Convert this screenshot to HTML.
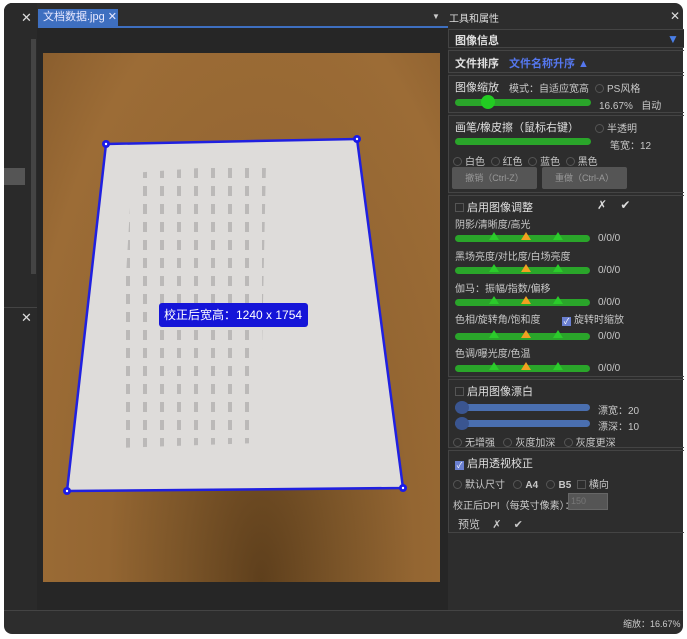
<!DOCTYPE html>
<html><head><meta charset="utf-8"><style>
*{margin:0;padding:0;box-sizing:border-box}
body{width:687px;height:639px;background:#fff;position:relative;overflow:hidden;font-family:"Liberation Sans","Noto Sans CJK SC",sans-serif;font-size:10px;color:#c8c8c8}
.a{position:absolute}
.win{left:4px;top:3px;width:679px;height:631px;background:#2d2d2d;border-radius:8px;overflow:hidden}
.sec{position:absolute;left:448px;width:236px;border:1px solid #444;border-right:none}
.bar{position:absolute;height:7px;border-radius:4px;background:#2aa52a}
.bbar{position:absolute;height:7px;border-radius:4px;background:#4a6fb0}
.tg{position:absolute;width:0;height:0;border-left:5px solid transparent;border-right:5px solid transparent;border-bottom:8px solid #2bcb2b}
.to{position:absolute;width:0;height:0;border-left:5px solid transparent;border-right:5px solid transparent;border-bottom:8px solid #f0a020}
.cb{display:inline-block;width:9px;height:9px;border:1px solid #555;vertical-align:-1px;margin-right:3px}
.rd{display:inline-block;width:9px;height:9px;border:1px solid #555;border-radius:50%;vertical-align:-1px;margin-right:3px}
.chk{display:inline-block;width:9px;height:9px;background:#6a7fd0;vertical-align:-1px;margin-right:3px;color:#fff;font-size:8px;line-height:9px;text-align:center}
.t{position:absolute;white-space:nowrap}
.h{font-size:11px;color:#e0e0e0}
.btn{position:absolute;background:#555;color:#999;border-radius:2px;font-size:9px;text-align:center;line-height:22px}
</style></head><body>
<div class="a win">
<div class="a" style="left:0;top:0;width:33px;height:607px;background:#2a2a2a"></div>
<div class="t" style="left:17px;top:7px;font-size:13px;color:#ddd">✕</div>
<div class="a" style="left:27px;top:36px;width:5px;height:235px;background:#444"></div>
<div class="a" style="left:0;top:165px;width:21px;height:17px;background:#555"></div>
<div class="t" style="left:17px;top:307px;font-size:13px;color:#ddd">✕</div>
<div class="a" style="left:0;top:304px;width:33px;height:1px;background:#444"></div>
<div class="a" style="left:34px;top:6px;width:80px;height:17px;background:#3e6fc0;color:#e8e8ff;font-size:11px;line-height:17px;padding-left:5px">文档数据.jpg ✕</div>
<div class="a" style="left:34px;top:23px;width:410px;height:2px;background:#3e6fc0"></div>
<div class="t" style="left:428px;top:9px;font-size:8px;color:#ccc">▼</div>
<div class="a" style="left:33px;top:25px;width:411px;height:582px;background:#262626"></div>
<div class="a" style="left:39px;top:50px;width:397px;height:529px;background:radial-gradient(ellipse at 55% 100%,#5e3f1c 0%,#7a5428 25%,#946632 50%,#9c6c36 80%,#8a5e2e 100%)"></div>
<svg class="a" style="left:0;top:0" width="440" height="600">
<defs><pattern id="p" x="0" y="0" width="17" height="18" patternUnits="userSpaceOnUse"><rect x="3" y="3" width="4" height="10" fill="#777" opacity=".35"/></pattern></defs>
<polygon points="102,141 353,136 399,485 63,488" fill="#dedcda" stroke="#2020e0" stroke-width="2.5"/>
<polygon points="128,170 262,160 256,440 112,445" fill="url(#p)"/>
<g fill="#1a1ae8"><circle cx="102" cy="141" r="4"/><circle cx="353" cy="136" r="4"/><circle cx="399" cy="485" r="4"/><circle cx="63" cy="488" r="4"/></g>
<g fill="#fff"><circle cx="102" cy="141" r="1.2"/><circle cx="353" cy="136" r="1.2"/><circle cx="399" cy="485" r="1.2"/><circle cx="63" cy="488" r="1.2"/></g>
</svg>
<div class="a" style="left:155px;top:300px;width:149px;height:24px;background:#1515d8;border-radius:3px;color:#fff;font-size:12px;line-height:24px;padding-left:5px">校正后宽高：1240 x 1754</div>
<div class="t" style="left:445px;top:7px;font-size:10px;color:#ddd">工具和属性</div>
<div class="t" style="left:666px;top:6px;font-size:12px;color:#ddd">✕</div>
<div class="a" style="left:0;top:607px;width:679px;height:1px;background:#444"></div>
<div class="t" style="left:619px;top:614px;font-size:9px;color:#ccc">缩放：16.67%</div>
</div>

<div class="sec" style="top:29px;height:19px;background:#2a2a2a"><span class="t h" style="left:6px;top:2px;font-weight:bold">图像信息</span><span class="t" style="left:218px;top:2px;color:#4a7fe8;font-size:12px">▼</span></div>
<div class="sec" style="top:50px;height:23px"><span class="t h" style="left:6px;top:4px;font-weight:bold">文件排序</span><span class="t" style="left:60px;top:4px;color:#5577ee;font-size:11px;font-weight:bold">文件名称升序 ▲</span></div>
<div class="sec" style="top:75px;height:38px">
<span class="t h" style="left:6px;top:3px">图像缩放</span><span class="t" style="left:60px;top:4px">模式：自适应宽高</span><span class="t" style="left:146px;top:4px"><span class="rd"></span>PS风格</span>
<div class="bar" style="left:6px;top:23px;width:136px"></div><div class="a" style="left:32px;top:19px;width:14px;height:14px;border-radius:50%;background:#22cc22"></div>
<span class="t" style="left:150px;top:21px">16.67%&nbsp;&nbsp;&nbsp;自动</span></div>
<div class="sec" style="top:115px;height:78px">
<span class="t h" style="left:6px;top:3px">画笔/橡皮擦（鼠标右键）</span><span class="t" style="left:146px;top:4px"><span class="rd"></span>半透明</span>
<div class="bar" style="left:6px;top:22px;width:136px"></div><span class="t" style="left:161px;top:21px">笔宽：12</span>
<span class="t" style="left:4px;top:37px"><span class="rd"></span>白色&nbsp;&nbsp;<span class="rd"></span>红色&nbsp;&nbsp;<span class="rd"></span>蓝色&nbsp;&nbsp;<span class="rd"></span>黑色</span>
<div class="btn" style="left:3px;top:51px;width:85px">撤销（Ctrl-Z）</div><div class="btn" style="left:93px;top:51px;width:85px">重做（Ctrl-A）</div></div>
<div class="sec" style="top:195px;height:182px">
<span class="t h" style="left:6px;top:3px"><span class="cb"></span>启用图像调整</span><span class="t" style="left:148px;top:2px;font-size:12px;color:#ddd">✗&nbsp;&nbsp;&nbsp;&nbsp;✔</span>
<span class="t" style="left:6px;top:20px">阴影/清晰度/高光</span><span class="t" style="left:6px;top:52px">黑场亮度/对比度/白场亮度</span><span class="t" style="left:6px;top:84px">伽马：振幅/指数/偏移</span><span class="t" style="left:6px;top:115px">色相/旋转角/饱和度</span><span class="t" style="left:113px;top:115px"><span class="chk">✓</span>旋转时缩放</span><span class="t" style="left:6px;top:149px">色调/曝光度/色温</span>
<div class="bar" style="left:6px;top:39px;width:135px"></div><div class="tg" style="left:40px;top:36px"></div><div class="to" style="left:72px;top:36px"></div><div class="tg" style="left:104px;top:36px"></div><span class="t" style="left:149px;top:37px">0/0/0</span>
<div class="bar" style="left:6px;top:71px;width:135px"></div><div class="tg" style="left:40px;top:68px"></div><div class="to" style="left:72px;top:68px"></div><div class="tg" style="left:104px;top:68px"></div><span class="t" style="left:149px;top:69px">0/0/0</span>
<div class="bar" style="left:6px;top:103px;width:135px"></div><div class="tg" style="left:40px;top:100px"></div><div class="to" style="left:72px;top:100px"></div><div class="tg" style="left:104px;top:100px"></div><span class="t" style="left:149px;top:101px">0/0/0</span>
<div class="bar" style="left:6px;top:137px;width:135px"></div><div class="tg" style="left:40px;top:134px"></div><div class="to" style="left:72px;top:134px"></div><div class="tg" style="left:104px;top:134px"></div><span class="t" style="left:149px;top:135px">0/0/0</span>
<div class="bar" style="left:6px;top:169px;width:135px"></div><div class="tg" style="left:40px;top:166px"></div><div class="to" style="left:72px;top:166px"></div><div class="tg" style="left:104px;top:166px"></div><span class="t" style="left:149px;top:167px">0/0/0</span>
</div>
<div class="sec" style="top:379px;height:69px">
<span class="t h" style="left:6px;top:3px"><span class="cb"></span>启用图像漂白</span>
<div class="bbar" style="left:6px;top:24px;width:135px"></div><div class="a" style="left:6px;top:21px;width:14px;height:13px;border-radius:50%;background:#3a5590"></div><span class="t" style="left:149px;top:22px">漂宽：20</span>
<div class="bbar" style="left:6px;top:40px;width:135px"></div><div class="a" style="left:6px;top:37px;width:14px;height:13px;border-radius:50%;background:#3a5590"></div><span class="t" style="left:149px;top:38px">漂深：10</span>
<span class="t" style="left:4px;top:54px"><span class="rd"></span>无增强&nbsp;&nbsp;&nbsp;<span class="rd"></span>灰度加深&nbsp;&nbsp;&nbsp;<span class="rd"></span>灰度更深</span></div>
<div class="sec" style="top:450px;height:83px">
<span class="t h" style="left:6px;top:4px"><span class="chk">✓</span>启用透视校正</span>
<span class="t" style="left:4px;top:25px"><span class="rd"></span>默认尺寸&nbsp;&nbsp;&nbsp;<span class="rd"></span><b>A4</b>&nbsp;&nbsp;&nbsp;<span class="rd"></span><b>B5</b>&nbsp;&nbsp;<span class="cb"></span>横向</span>
<span class="t" style="left:4px;top:46px">校正后DPI（每英寸像素）：</span><div class="a" style="left:119px;top:42px;width:40px;height:17px;background:#555;border:1px solid #666;color:#777;font-size:9px;padding:2px">150</div>
<span class="t" style="left:9px;top:65px;font-size:11px">预览&nbsp;&nbsp;&nbsp;&nbsp;✗&nbsp;&nbsp;&nbsp;&nbsp;✔</span></div>
</body></html>
